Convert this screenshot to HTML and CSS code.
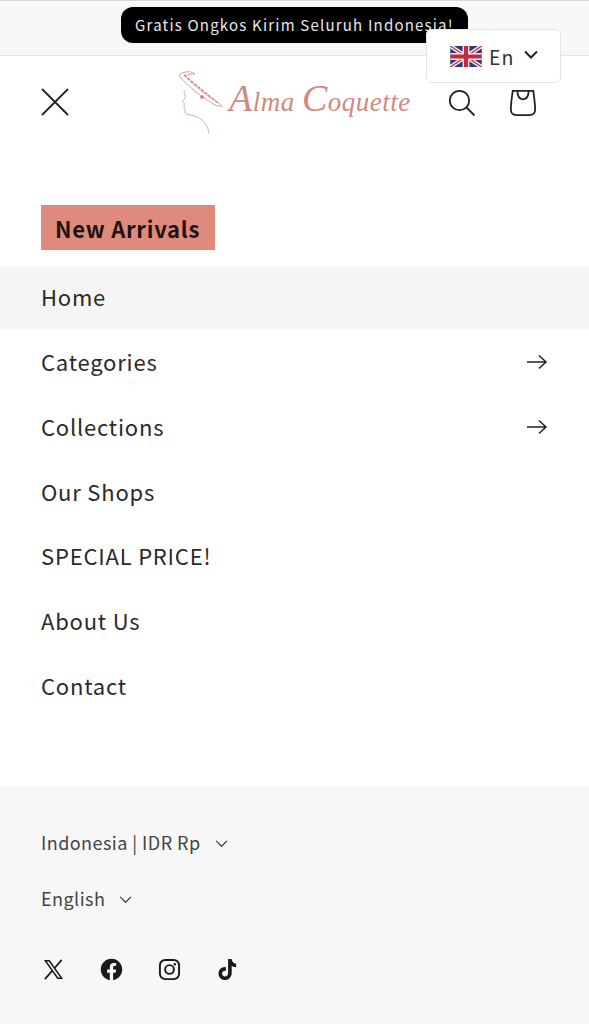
FILE: index.html
```html
<!DOCTYPE html>
<html lang="en">
<head>
  <meta charset="UTF-8">
  <title>Alma Coquette</title>
  <link rel="stylesheet" href="styles.css">
</head>
<body>

  <div class="announcement">
    <p class="announcement-pill">Gratis Ongkos Kirim Seluruh Indonesia!</p>
  </div>

  <div class="lang-switch">
    <svg class="flag" viewBox="0 0 60 40" width="32" height="21">
      <rect width="60" height="40" fill="#2b3a78"/>
      <path d="M0 0L60 40M60 0L0 40" stroke="#eee" stroke-width="8"/>
      <path d="M0 0L60 40M60 0L0 40" stroke="#c8283f" stroke-width="2.5"/>
      <path d="M30 0V40M0 20H60" stroke="#eee" stroke-width="13"/>
      <path d="M30 0V40M0 20H60" stroke="#c8283f" stroke-width="8"/>
    </svg>
    <span>En</span>
    <svg class="chevron-lang" viewBox="0 0 14 9" width="14" height="9">
      <path d="M1 1.500L7 7.500L13 1.500" fill="none" stroke="#222" stroke-width="2"/>
    </svg>
  </div>

  <header class="site-header">
    <button class="icon-btn close-btn" aria-label="Close">
      <svg viewBox="0 0 28 28" width="28" height="28">
        <path d="M1 1L27 27M27 1L1 27" stroke="#222" stroke-width="1.800" fill="none"/>
      </svg>
    </button>

    <a class="logo">
      <svg class="logo-head" viewBox="0 0 46 66" width="46" height="66">
        <path d="M2 4C8 1 14 1 17 4C14 4 10 4 7 6C12 12 22 20 33 28C38 31 42 34 44 36C38 37 32 32 26 28C18 22 8 14 3 8C1 6 1 5 2 4Z" fill="none" stroke="#d99a8e" stroke-width="1"/>
        <path d="M6 5L40 33" stroke="#c9776b" stroke-width="1.100" stroke-dasharray="3 1.500" fill="none"/>
        <circle cx="24" cy="27" r="1.800" fill="#c9776b"/>
        <path d="M6 20C6 24 8 25 7 28C5 31 4 32 6 33C7 34 6 35 6 37C6 40 8 40 7 42C8 46 14 44 19 47C26 50 30 56 31 64" fill="none" stroke="#dcaea6" stroke-width="1"/>
      </svg>
      <span class="logo-text"><span class="logo-cap">A</span>lma <span class="logo-cap">C</span>oquette</span>
    </a>

    <div class="header-icons">
      <button class="icon-btn" aria-label="Search">
        <svg viewBox="0 0 28 28" width="28" height="28">
          <circle cx="11.500" cy="11.500" r="9.700" fill="none" stroke="#222" stroke-width="1.800"/>
          <path d="M18.500 18.500L26.500 26.500" stroke="#222" stroke-width="1.800" fill="none"/>
        </svg>
      </button>
      <button class="icon-btn" aria-label="Cart">
        <svg viewBox="0 0 30 30" width="28" height="28">
          <path d="M4 2H26C27 9 28 16 28 22C28 26 26 28 22 28H8C4 28 2 26 2 22C2 16 3 9 4 2Z" fill="none" stroke="#222" stroke-width="1.900"/>
          <path d="M9 2C9 8 11 11 15 11C19 11 21 8 21 2" fill="none" stroke="#222" stroke-width="1.900"/>
        </svg>
      </button>
    </div>
  </header>

  <nav class="menu">
    <div class="badge-row"><span class="badge">New Arrivals</span></div>
    <ul class="menu-list">
      <li class="menu-item active">Home</li>
      <li class="menu-item">Categories
        <svg class="arrow" viewBox="0 0 22 16" width="22" height="16"><path d="M1 8H20M13 1.500L20 8L13 14.500" fill="none" stroke="#222" stroke-width="1.500"/></svg>
      </li>
      <li class="menu-item">Collections
        <svg class="arrow" viewBox="0 0 22 16" width="22" height="16"><path d="M1 8H20M13 1.500L20 8L13 14.500" fill="none" stroke="#222" stroke-width="1.500"/></svg>
      </li>
      <li class="menu-item">Our Shops</li>
      <li class="menu-item">SPECIAL PRICE!</li>
      <li class="menu-item">About Us</li>
      <li class="menu-item">Contact</li>
    </ul>
  </nav>

  <footer class="drawer-footer">
    <div class="selector">Indonesia | IDR Rp
      <svg viewBox="0 0 14 9" width="13" height="8"><path d="M1 1L7 7L13 1" fill="none" stroke="#444" stroke-width="1.500"/></svg>
    </div>
    <div class="selector">English
      <svg viewBox="0 0 14 9" width="13" height="8"><path d="M1 1L7 7L13 1" fill="none" stroke="#444" stroke-width="1.500"/></svg>
    </div>
    <div class="socials">
      <svg viewBox="0 0 24 24" width="23" height="23">
        <path d="M2 2H8L22 22H16ZM5 3.600L16.900 20.400H19L7.100 3.600Z" fill="#1a1a1a" fill-rule="evenodd"/>
        <path d="M20.500 2L13.200 10.400M10.600 13.400L3 22" stroke="#1a1a1a" stroke-width="1.800" fill="none"/>
      </svg>
      <svg viewBox="0 0 24 24" width="23" height="23">
        <path d="M12 .8C5.800.8.800 5.800.800 12c0 5.600 4.100 10.200 9.400 11.100v-7.800H7.400V12h2.800V9.600c0-2.800 1.700-4.400 4.200-4.400 1.200 0 2.500.2 2.500.2v2.800h-1.400c-1.400 0-1.800.9-1.800 1.800V12h3.100l-.5 3.300h-2.600v7.800c5.300-.9 9.500-5.500 9.500-11.100C23.200 5.800 18.200.8 12 .8Z" fill="#1a1a1a"/>
      </svg>
      <svg viewBox="0 0 24 24" width="23" height="23">
        <rect x="2" y="2" width="20" height="20" rx="5.500" fill="none" stroke="#1a1a1a" stroke-width="2"/>
        <circle cx="12" cy="12" r="4.600" fill="none" stroke="#1a1a1a" stroke-width="2"/>
        <circle cx="17.500" cy="6.500" r="1.300" fill="#1a1a1a"/>
      </svg>
      <svg viewBox="0 0 24 24" width="23" height="23">
        <path d="M12.600 1H16.300C16.600 3.800 18.300 5.600 21 5.900V9.500C19.200 9.500 17.700 9 16.400 8V15.600C16.400 19.800 13.300 23 9.300 23C5.600 23 2.600 20 2.600 16.200C2.600 12.100 6.100 9 10.300 9.500V13.300C8.200 12.800 6.300 14.200 6.300 16.200C6.300 17.900 7.600 19.300 9.300 19.300C11.200 19.300 12.600 17.900 12.600 15.600Z" fill="#1a1a1a"/>
      </svg>
    </div>
  </footer>

</body>
</html>
```

FILE: styles.css
```css
* {
  box-sizing: border-box;
}

html,
body {
  height: 100%;
}

body {
  margin: 0;
  display: flex;
  flex-direction: column;
  position: relative;
  overflow: hidden;
  font-family: "Noto Sans CJK JP", "Noto Sans", sans-serif;
  color: #2a2a2a;
  background: #fff;
}

.announcement {
  height: 56px;
  padding-top: 7px;
  display: flex;
  justify-content: center;
  align-items: flex-start;
  background: #f8f8f8;
  border-top: 1px solid #d8d8d8;
  border-bottom: 1px solid #e4e4e4;
}

.announcement-pill {
  margin: -1px 0 0;
  width: 347px;
  height: 36px;
  padding-left: 14px;
  background: #000;
  color: #e8e8e8;
  border-radius: 12px;
  font-size: 15px;
  line-height: 36px;
  letter-spacing: 1.2px;
  white-space: nowrap;
  overflow: hidden;
}

.lang-switch {
  position: absolute;
  top: 29px;
  left: 426px;
  width: 135px;
  height: 54px;
  display: flex;
  align-items: center;
  padding-left: 23px;
  background: #fff;
  border: 1px solid #e6e6e6;
  border-radius: 5px;
  font-size: 19.5px;
  letter-spacing: 1px;
  color: #333;
}

.lang-switch span {
  margin-left: 7px;
}

.chevron-lang {
  margin-left: 10px;
  margin-top: -4px;
}

.flag {
  display: block;
}

.site-header {
  height: 94px;
  display: flex;
  align-items: center;
  padding: 0 52px 0 41px;
}

.icon-btn {
  border: 0;
  padding: 0;
  background: none;
  display: block;
}

.icon-btn svg {
  display: block;
}

.close-btn {
  margin-top: -2px;
}

.logo {
  margin-left: 109px;
  margin-top: -1px;
  display: flex;
  align-items: center;
  position: relative;
}

.logo-text {
  position: absolute;
  left: 51px;
  top: 10px;
  font-family: "Liberation Serif", serif;
  font-style: italic;
  font-size: 27px;
  line-height: 44px;
  letter-spacing: .5px;
  color: #d08a7e;
  white-space: nowrap;
}

.logo-cap {
  font-size: 38px;
  line-height: 0;
}

.header-icons {
  margin-left: auto;
  margin-top: -1px;
  display: flex;
  align-items: center;
  gap: 33px;
}

.menu {
  flex: 1;
}

.badge-row {
  padding: 55px 0 17px 41px;
}

.badge {
  display: block;
  width: 174px;
  height: 45px;
  padding-left: 14px;
  background: #de8a7d;
  color: #1f1212;
  font-size: 22px;
  font-weight: 700;
  line-height: 46px;
  letter-spacing: .75px;
}

.menu-list {
  list-style: none;
  margin: 0;
  padding: 0;
}

.menu-item {
  height: 64.7px;
  display: flex;
  align-items: center;
  justify-content: space-between;
  padding: 0 41px;
  font-size: 22px;
  letter-spacing: .8px;
}

.menu-item.active {
  height: 62px;
  padding-bottom: 4px;
  background: #f5f5f5;
}

.arrow {
  margin-top: 1px;
}

.drawer-footer {
  height: 237px;
  padding: 40px 41px 0;
  background: #f7f7f7;
}

.selector {
  height: 30px;
  margin-bottom: 26px;
  display: flex;
  align-items: center;
  gap: 14px;
  font-size: 18px;
  letter-spacing: .45px;
  color: #444;
}

.selector svg {
  margin-top: 3px;
}

.socials {
  display: flex;
  align-items: center;
  gap: 35px;
  margin-top: 45px;
  margin-left: 1px;
}
```
